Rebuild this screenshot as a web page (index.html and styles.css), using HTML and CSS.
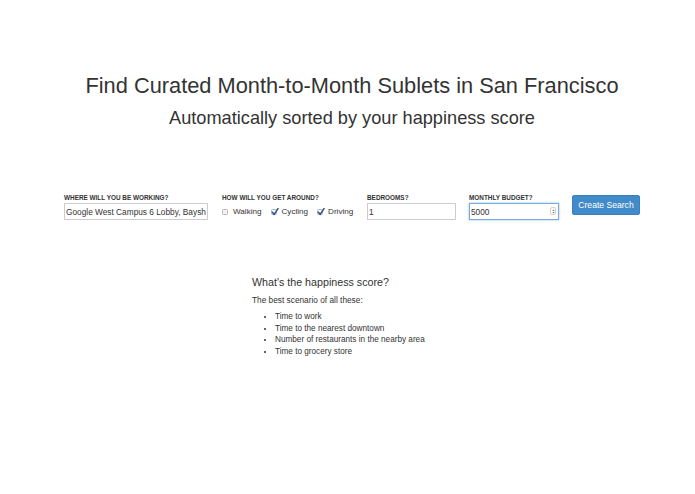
FILE: index.html
```html
<!DOCTYPE html>
<html>
<head>
<meta charset="utf-8">
<link rel="stylesheet" href="styles.css">
</head>
<body>
<main class="page">
  <header class="hero">
    <h1 class="title">Find Curated Month-to-Month Sublets in San Francisco</h1>
    <h2 class="subtitle">Automatically sorted by your happiness score</h2>
  </header>

  <form class="search">
    <div class="field field-work">
      <label class="label">WHERE WILL YOU BE WORKING?</label>
      <input class="input" type="text" value="Google West Campus 6 Lobby, Bayshore">
    </div>
    <div class="field field-transport">
      <label class="label">HOW WILL YOU GET AROUND?</label>
      <div class="checks">
        <span class="check"><span class="box"></span>Walking</span>
        <span class="check"><span class="box checked"><svg viewBox="0 0 8 8" width="8" height="8"><path d="M1.4 4.3 L3.2 6.4 L7 0.6" fill="none" stroke="#2a4f8f" stroke-width="1.5" stroke-linecap="round" stroke-linejoin="round"/></svg></span>Cycling</span>
        <span class="check"><span class="box checked"><svg viewBox="0 0 8 8" width="8" height="8"><path d="M1.4 4.3 L3.2 6.4 L7 0.6" fill="none" stroke="#2a4f8f" stroke-width="1.5" stroke-linecap="round" stroke-linejoin="round"/></svg></span>Driving</span>
      </div>
    </div>
    <div class="field field-small">
      <label class="label">BEDROOMS?</label>
      <input class="input" type="text" value="1">
    </div>
    <div class="field field-small field-budget">
      <label class="label">MONTHLY BUDGET?</label>
      <div class="budget">
        <input class="input input-focus" type="text" value="5000">
        <span class="spin"><svg viewBox="0 0 4 6" width="3" height="5"><path d="M2 0.3 L3.6 2.4 H0.4 Z M2 5.7 L3.6 3.6 H0.4 Z" fill="#777"/></svg></span>
      </div>
    </div>
    <button type="button" class="btn">Create Search</button>
  </form>

  <section class="about">
    <h3 class="about-title">What's the happiness score?</h3>
    <p class="about-text">The best scenario of all these:</p>
    <ul class="about-list">
      <li>Time to work</li>
      <li>Time to the nearest downtown</li>
      <li>Number of restaurants in the nearby area</li>
      <li>Time to grocery store</li>
    </ul>
  </section>
</main>
</body>
</html>
```

FILE: styles.css
```css
html, body {
  margin: 0;
  padding: 0;
  background: #ffffff;
}
body {
  font-family: "Liberation Sans", Arial, Helvetica, sans-serif;
  color: #333333;
}
.page {
  padding-left: 9px;
  display: flex;
  flex-direction: column;
  align-items: center;
}
.hero {
  text-align: center;
  padding-top: 73px;
}
.title {
  margin: 0;
  font-size: 21.8px;
  font-weight: normal;
  line-height: 26px;
  color: #333;
}
.subtitle {
  margin: 8px 0 0;
  font-size: 18.2px;
  font-weight: normal;
  line-height: 22px;
  color: #333;
}
.search {
  margin: 65px 0 0;
  display: flex;
  align-items: flex-start;
  width: 576px;
}
.field {
  display: flex;
  flex-direction: column;
  flex-shrink: 0;
}
.label {
  font-size: 6.4px;
  font-weight: bold;
  line-height: 8px;
  color: #333;
  margin-bottom: 1px;
}
.field-work { width: 144px; margin-right: 14px; }
.field-transport { width: 131px; margin-right: 14px; }
.field-small { width: 89px; margin-right: 13px; }
.field-budget { width: 90px; margin-right: 13px; }
.input {
  box-sizing: border-box;
  display: block;
  width: 100%;
  height: 17px;
  margin: 0;
  border: 1px solid #cccccc;
  border-radius: 0;
  padding: 0 1px;
  font-family: "Liberation Sans", Arial, sans-serif;
  font-size: 8.3px;
  line-height: 15px;
  color: #333;
  background: #fff;
  outline: none;
}
.input-focus {
  border-color: #7ea9d8;
  box-shadow: 0 0 2px rgba(102, 175, 233, 0.8);
}
.budget {
  position: relative;
}
.spin {
  position: absolute;
  right: 3px;
  top: 4px;
  width: 6px;
  height: 8px;
  border: 1px solid #d2d2d2;
  border-radius: 2px;
  box-sizing: border-box;
  display: flex;
  align-items: center;
  justify-content: center;
}
.checks {
  display: flex;
  align-items: center;
  height: 17px;
  gap: 9px;
}
.check {
  display: flex;
  align-items: center;
  font-size: 8.1px;
  color: #333;
}
.box {
  box-sizing: border-box;
  width: 6px;
  height: 6px;
  border: 1px solid #b5b5b5;
  border-radius: 1.5px;
  margin: 0 5px 0 0;
  position: relative;
  background: #f4f4f4;
}
.box svg {
  position: absolute;
  left: -1px;
  top: -2px;
}
.btn {
  flex-shrink: 0;
  margin-top: 1px;
  width: 68px;
  height: 20px;
  background: #428bca;
  border: 1px solid #3a80bf;
  border-radius: 2px;
  color: #ffffff;
  font-family: "Liberation Sans", Arial, sans-serif;
  font-size: 8.6px;
  padding: 0;
}
.about {
  margin-top: 55px;
  width: 200px;
}
.about-title {
  margin: 0;
  font-size: 10.7px;
  font-weight: normal;
  line-height: 14px;
  color: #333;
}
.about-text {
  margin: 5px 0 0;
  font-size: 8.3px;
  line-height: 12px;
}
.about-list {
  margin: 5px 0 0;
  padding-left: 23px;
  font-size: 8.2px;
  line-height: 11.7px;
}
```
